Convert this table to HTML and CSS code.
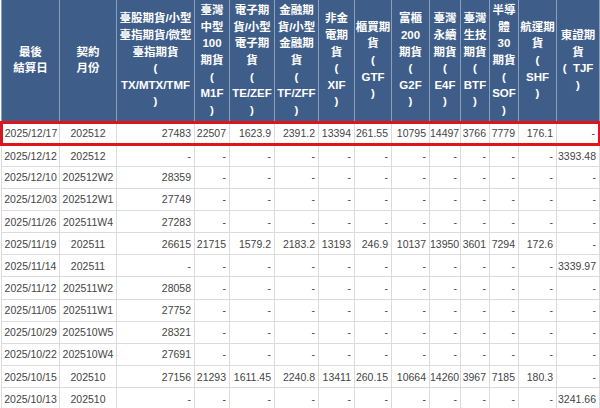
FILE: index.html
```html
<!DOCTYPE html>
<html lang="zh-Hant">
<head>
<meta charset="utf-8">
<link rel="stylesheet" href="styles.css">
</head>
<body>
<table class="grid">
<colgroup>
<col style="width:58px"><col style="width:57px"><col style="width:78px"><col style="width:35px"><col style="width:45px"><col style="width:44px"><col style="width:36px"><col style="width:37px"><col style="width:38px"><col style="width:31px"><col style="width:29px"><col style="width:29px"><col style="width:38px"><col style="width:43px">
</colgroup>
<thead>
<tr class="head">
<th>最後<br>結算日</th>
<th>契約<br>月份</th>
<th>臺股期貨/小型<br>臺指期貨/微型<br>臺指期貨<br>(<br>TX/MTX/TMF<br>)</th>
<th>臺灣<br>中型<br>100<br>期貨<br>(<br>M1F<br>)</th>
<th>電子期<br>貨/小型<br>電子期<br>貨<br>(<br>TE/ZEF<br>)</th>
<th>金融期<br>貨/小型<br>金融期<br>貨<br>(<br>TF/ZFF<br>)</th>
<th>非金<br>電期<br>貨<br>(<br>XIF<br>)</th>
<th>櫃買期<br>貨<br>(<br>GTF<br>)</th>
<th>富櫃<br>200<br>期貨<br>(<br>G2F<br>)</th>
<th>臺灣<br>永續<br>期貨<br>(<br>E4F<br>)</th>
<th>臺灣<br>生技<br>期貨<br>(<br>BTF<br>)</th>
<th>半導<br>體<br>30<br>期貨<br>(<br>SOF<br>)</th>
<th>航運期<br>貨<br>(<br>SHF<br>)</th>
<th>東證期<br>貨<br>(&nbsp;&nbsp;TJF<br>)</th>
</tr>
</thead>
<tbody>
<tr class="current"><td class="c">2025/12/17</td><td class="c">202512</td><td>27483</td><td>22507</td><td>1623.9</td><td>2391.2</td><td>13394</td><td>261.55</td><td>10795</td><td>14497</td><td>3766</td><td>7779</td><td>176.1</td><td>-</td></tr>
<tr><td class="c">2025/12/12</td><td class="c">202512</td><td>-</td><td>-</td><td>-</td><td>-</td><td>-</td><td>-</td><td>-</td><td>-</td><td>-</td><td>-</td><td>-</td><td>3393.48</td></tr>
<tr><td class="c">2025/12/10</td><td class="c">202512W2</td><td>28359</td><td>-</td><td>-</td><td>-</td><td>-</td><td>-</td><td>-</td><td>-</td><td>-</td><td>-</td><td>-</td><td>-</td></tr>
<tr><td class="c">2025/12/03</td><td class="c">202512W1</td><td>27749</td><td>-</td><td>-</td><td>-</td><td>-</td><td>-</td><td>-</td><td>-</td><td>-</td><td>-</td><td>-</td><td>-</td></tr>
<tr><td class="c">2025/11/26</td><td class="c">202511W4</td><td>27283</td><td>-</td><td>-</td><td>-</td><td>-</td><td>-</td><td>-</td><td>-</td><td>-</td><td>-</td><td>-</td><td>-</td></tr>
<tr><td class="c">2025/11/19</td><td class="c">202511</td><td>26615</td><td>21715</td><td>1579.2</td><td>2183.2</td><td>13193</td><td>246.9</td><td>10137</td><td>13950</td><td>3601</td><td>7294</td><td>172.6</td><td>-</td></tr>
<tr><td class="c">2025/11/14</td><td class="c">202511</td><td>-</td><td>-</td><td>-</td><td>-</td><td>-</td><td>-</td><td>-</td><td>-</td><td>-</td><td>-</td><td>-</td><td>3339.97</td></tr>
<tr><td class="c">2025/11/12</td><td class="c">202511W2</td><td>28058</td><td>-</td><td>-</td><td>-</td><td>-</td><td>-</td><td>-</td><td>-</td><td>-</td><td>-</td><td>-</td><td>-</td></tr>
<tr><td class="c">2025/11/05</td><td class="c">202511W1</td><td>27752</td><td>-</td><td>-</td><td>-</td><td>-</td><td>-</td><td>-</td><td>-</td><td>-</td><td>-</td><td>-</td><td>-</td></tr>
<tr><td class="c">2025/10/29</td><td class="c">202510W5</td><td>28321</td><td>-</td><td>-</td><td>-</td><td>-</td><td>-</td><td>-</td><td>-</td><td>-</td><td>-</td><td>-</td><td>-</td></tr>
<tr><td class="c">2025/10/22</td><td class="c">202510W4</td><td>27691</td><td>-</td><td>-</td><td>-</td><td>-</td><td>-</td><td>-</td><td>-</td><td>-</td><td>-</td><td>-</td><td>-</td></tr>
<tr><td class="c">2025/10/15</td><td class="c">202510</td><td>27156</td><td>21293</td><td>1611.45</td><td>2240.8</td><td>13411</td><td>260.15</td><td>10664</td><td>14260</td><td>3967</td><td>7185</td><td>180.3</td><td>-</td></tr>
<tr><td class="c">2025/10/13</td><td class="c">202510</td><td>-</td><td>-</td><td>-</td><td>-</td><td>-</td><td>-</td><td>-</td><td>-</td><td>-</td><td>-</td><td>-</td><td>3241.66</td></tr>
</tbody>
</table>
</body>
</html>
```
FILE: styles.css
```css
html, body {
  margin: 0;
  padding: 0;
  background: #ffffff;
}

.grid {
  table-layout: fixed;
  width: 598px;
  border-collapse: collapse;
  font-family: "Liberation Sans", Arial, "Noto Sans CJK TC", sans-serif;
}

.head {
  height: 122px;
}

.head th {
  background: #3e5d89;
  color: #ffffff;
  font-size: 11.5px;
  font-weight: bold;
  line-height: 16.6px;
  text-align: center;
  vertical-align: middle;
  padding: 0;
  border-left: 1px solid #8da0bb;
  border-right: 1px solid #8da0bb;
  white-space: nowrap;
  overflow: hidden;
}

.grid tbody tr {
  height: 22.15px;
}

.grid td {
  font-size: 10.5px;
  color: #444444;
  text-align: right;
  padding: 0 3px 0 0;
  border: 1.5px solid #dcdcdc;
  white-space: nowrap;
  overflow: hidden;
}

.grid td.c {
  text-align: center;
  padding: 0;
}

.current td {
  border-top: 3px solid #e0141c;
  border-bottom: 3px solid #e0141c;
}

.current td:first-child {
  border-left: 3px solid #e0141c;
}

.current td:last-child {
  border-right: 3px solid #e0141c;
}
```
